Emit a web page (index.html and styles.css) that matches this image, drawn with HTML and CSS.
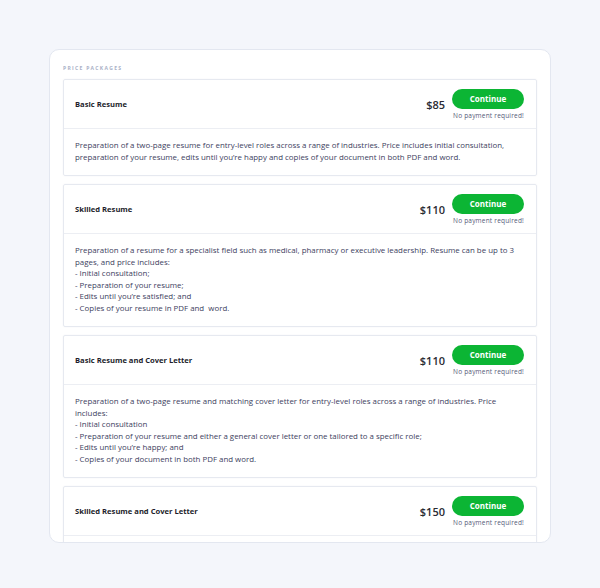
FILE: index.html
```html
<!DOCTYPE html>
<html>
<head>
<meta charset="utf-8">
<link rel="stylesheet" href="styles.css">
</head>
<body>
<div class="panel">
  <div class="label">PRICE PACKAGES</div>
  <div class="card">
    <div class="card-head">
      <div class="title">Basic Resume</div>
      <div class="price">$85</div>
      <div class="cta">
        <button class="btn">Continue</button>
        <div class="note">No payment required!</div>
      </div>
    </div>
    <div class="card-body">Preparation of a two-page resume for entry-level roles across a range of industries. Price includes initial consultation, preparation of your resume, edits until you’re happy and copies of your document in both PDF and word.</div>
  </div>
  <div class="card">
    <div class="card-head">
      <div class="title">Skilled Resume</div>
      <div class="price">$110</div>
      <div class="cta">
        <button class="btn">Continue</button>
        <div class="note">No payment required!</div>
      </div>
    </div>
    <div class="card-body">Preparation of a resume for a specialist field such as medical, pharmacy or executive leadership. Resume can be up to 3 pages, and price includes:<br>- Initial consultation;<br>- Preparation of your resume;<br>- Edits until you’re satisfied; and<br>- Copies of your resume in PDF and &nbsp;word.</div>
  </div>
  <div class="card">
    <div class="card-head">
      <div class="title">Basic Resume and Cover Letter</div>
      <div class="price">$110</div>
      <div class="cta">
        <button class="btn">Continue</button>
        <div class="note">No payment required!</div>
      </div>
    </div>
    <div class="card-body">Preparation of a two-page resume and matching cover letter for entry-level roles across a range of industries. Price includes:<br>- Initial consultation<br>- Preparation of your resume and either a general cover letter or one tailored to a specific role;<br>- Edits until you’re happy; and<br>- Copies of your document in both PDF and word.</div>
  </div>
  <div class="card">
    <div class="card-head">
      <div class="title">Skilled Resume and Cover Letter</div>
      <div class="price">$150</div>
      <div class="cta">
        <button class="btn">Continue</button>
        <div class="note">No payment required!</div>
      </div>
    </div>
    <div class="card-body card-body-empty"></div>
  </div>
</div>
</body>
</html>
```
FILE: styles.css
```css
html, body {
  margin: 0;
  padding: 0;
  background: #f4f6fb;
}
body {
  font-family: "Open Sans", "Liberation Sans", sans-serif;
  padding: 49px 0 0 49px;
}
.panel {
  box-sizing: border-box;
  width: 502px;
  height: 494px;
  background: #fff;
  border: 1px solid #e3e7f0;
  border-radius: 10px;
  padding: 14px 13px 0 13px;
  overflow: hidden;
}
.label {
  font-size: 5px;
  font-weight: 700;
  letter-spacing: 1.3px;
  color: #a9b0c6;
  line-height: 8px;
  margin-bottom: 7px;
}
.card {
  border: 1px solid #e6e9f0;
  border-radius: 2px;
  margin-bottom: 8px;
  box-shadow: 0 0 2px rgba(30, 40, 80, 0.05);
}
.card-head {
  height: 48px;
  display: flex;
  align-items: center;
  padding: 0 12px 0 11px;
  border-bottom: 1px solid #eceef3;
}
.title {
  flex: 1;
  font-size: 7.6px;
  font-weight: 700;
  color: #1c1d2b;
}
.price {
  font-size: 11px;
  font-weight: 600;
  color: #2a2b33;
  margin-right: 7px;
}
.cta {
  display: flex;
  flex-direction: column;
  align-items: flex-end;
}
.btn {
  width: 72px;
  height: 20px;
  border: none;
  border-radius: 10px;
  background: #0cb534;
  color: #fff;
  font-family: inherit;
  font-size: 8px;
  font-weight: 700;
  padding: 0;
}
.note {
  font-size: 6.5px;
  letter-spacing: 0.2px;
  color: #555b78;
  margin-top: 3px;
  line-height: 8px;
}
.card-body {
  padding: 11px 12px 12px 11px;
  font-size: 7.9px;
  line-height: 11.5px;
  color: #3d4160;
}
.card-body-empty {
  height: 40px;
}
```
